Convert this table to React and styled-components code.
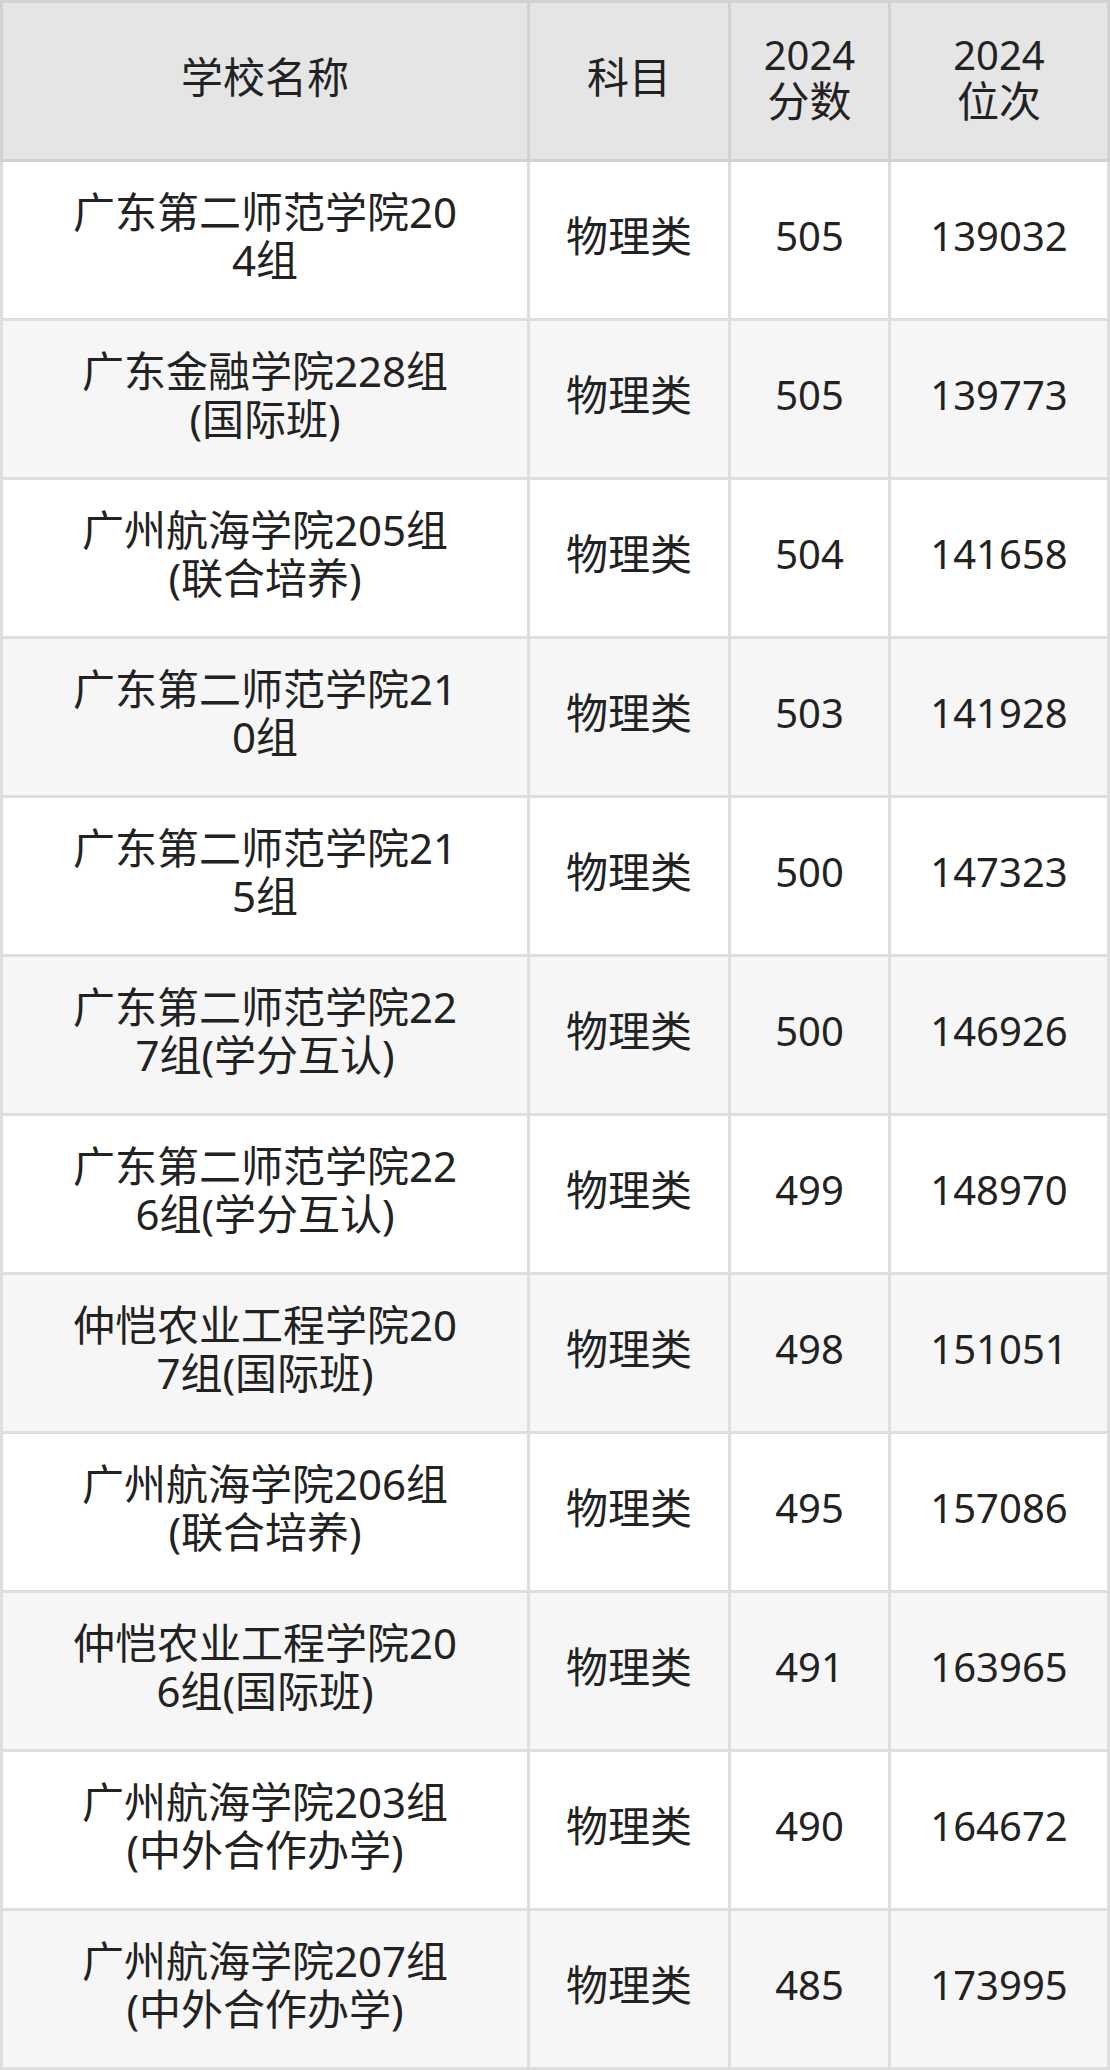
import React from 'react';
import styled, { createGlobalStyle } from 'styled-components';

const GlobalStyle = createGlobalStyle`
  html, body {
    margin: 0;
    padding: 0;
    background: #fff;
  }
  body {
    font-family: "Noto Sans", "Noto Sans CJK SC", sans-serif;
    color: #222;
  }
`;

const Table = styled.div`
  width: 1110px;
  display: flex;
  flex-direction: column;
`;

const Row = styled.div`
  display: grid;
  grid-template-columns: 524px 198px 157px 216px;
  column-gap: 3px;
  padding: ${props => (props.$first ? '3px 3px 3px' : '0 3px 3px')};
  background: ${props => (props.$head ? '#d2d2d2' : '#dedede')};
`;

const Cell = styled.div`
  height: 156px;
  box-sizing: border-box;
  display: flex;
  flex-direction: column;
  align-items: center;
  justify-content: center;
  text-align: center;
  padding: 0 ${props => (props.$wide ? '64px' : '6px')} 8px;
  font-size: 42px;
  line-height: ${props => (props.$head ? '46px' : '48px')};
  word-break: break-all;
  background: ${props => (props.$head ? '#e5e5e5' : props.$alt ? '#f6f6f6' : '#ffffff')};
  color: #222;
`;

const Line = styled.span`
  display: block;
`;

const Num = styled.span`
  font-size: 40px;
`;

const rows = [
  ['广东第二师范学院204组', '物理类', '505', '139032'],
  ['广东金融学院228组(国际班)', '物理类', '505', '139773'],
  ['广州航海学院205组(联合培养)', '物理类', '504', '141658'],
  ['广东第二师范学院210组', '物理类', '503', '141928'],
  ['广东第二师范学院215组', '物理类', '500', '147323'],
  ['广东第二师范学院227组(学分互认)', '物理类', '500', '146926'],
  ['广东第二师范学院226组(学分互认)', '物理类', '499', '148970'],
  ['仲恺农业工程学院207组(国际班)', '物理类', '498', '151051'],
  ['广州航海学院206组(联合培养)', '物理类', '495', '157086'],
  ['仲恺农业工程学院206组(国际班)', '物理类', '491', '163965'],
  ['广州航海学院203组(中外合作办学)', '物理类', '490', '164672'],
  ['广州航海学院207组(中外合作办学)', '物理类', '485', '173995'],
];

export default function App() {
  return (
    <>
      <GlobalStyle />
      <Table>
        <Row $head $first>
          <Cell $head $wide>学校名称</Cell>
          <Cell $head>科目</Cell>
          <Cell $head><Line><Num>2024</Num></Line><Line>分数</Line></Cell>
          <Cell $head><Line><Num>2024</Num></Line><Line>位次</Line></Cell>
        </Row>
        {rows.map((r, i) => (
          <Row key={i}>
            <Cell $wide $alt={i % 2 === 1}>{r[0]}</Cell>
            <Cell $alt={i % 2 === 1}>{r[1]}</Cell>
            <Cell $alt={i % 2 === 1}><Num>{r[2]}</Num></Cell>
            <Cell $alt={i % 2 === 1}><Num>{r[3]}</Num></Cell>
          </Row>
        ))}
      </Table>
    </>
  );
}
